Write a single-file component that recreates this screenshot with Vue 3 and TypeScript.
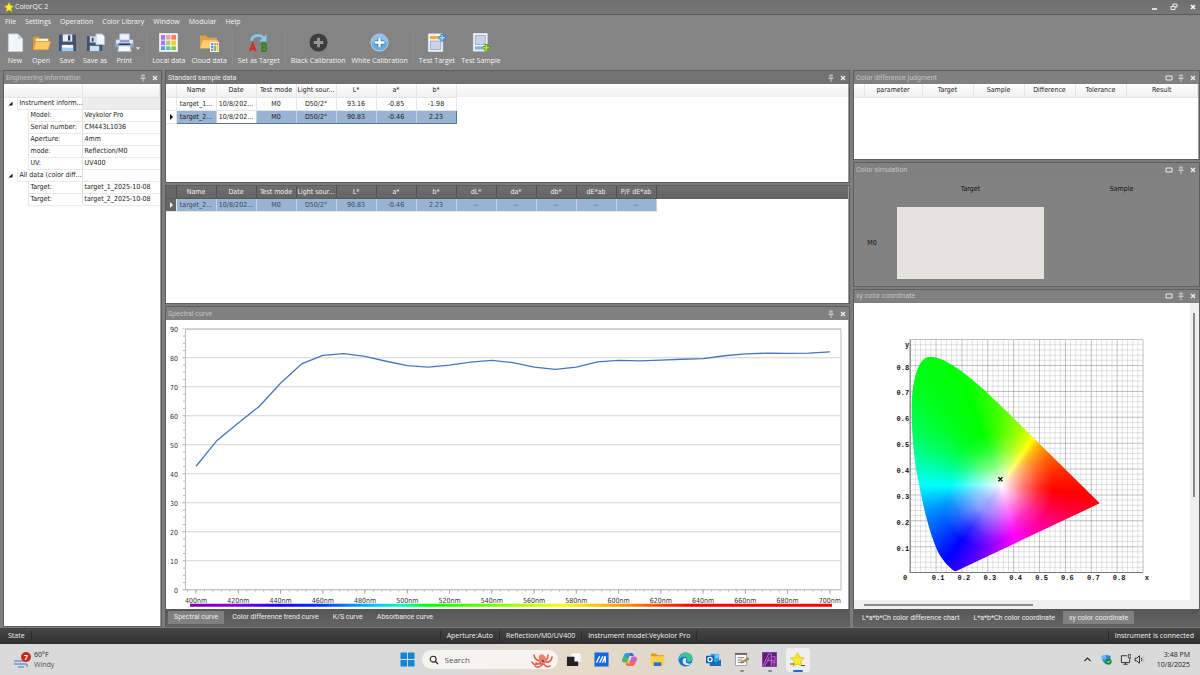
<script setup lang="ts">
import { ref } from 'vue'

interface InfoRow { label: string; value: string; group?: boolean }

const menus = ['File', 'Settings', 'Operation', 'Color Library', 'Window', 'Modular', 'Help']

const info: InfoRow[] = [
  { label: 'Instrument inform...', value: '', group: true },
  { label: 'Model:', value: 'Veykolor Pro' },
  { label: 'Serial number:', value: 'CM443L1036' },
  { label: 'Aperture:', value: '4mm' },
  { label: 'mode:', value: 'Reflection/M0' },
  { label: 'UV:', value: 'UV400' },
  { label: 'All data (color diff...', value: '', group: true },
  { label: 'Target:', value: 'target_1_2025-10-08' },
  { label: 'Target:', value: 'target_2_2025-10-08' },
]

const standardCols = ['Name', 'Date', 'Test mode', 'Light sour...', 'L*', 'a*', 'b*']
const standardRows = [
  ['target_1...', '10/8/202...', 'M0', 'D50/2°', '93.16', '-0.85', '-1.98'],
  ['target_2...', '10/8/202...', 'M0', 'D50/2°', '90.83', '-0.46', '2.23'],
]
const sampleCols = [...standardCols, 'dL*', 'da*', 'db*', 'dE*ab', 'P/F dE*ab']
const sampleRow = [...standardRows[1], '--', '--', '--', '--', '--']
const judgeCols = ['parameter', 'Target', 'Sample', 'Difference', 'Tolerance', 'Result']

const reflectance = [
  42.6, 51.5, 57.5, 63.3, 71.2, 77.9, 80.8, 81.4, 80.5, 78.8, 77.3, 76.8, 77.5, 78.5, 79.1, 78.3,
  76.8, 76, 76.8, 78.6, 79.1, 78.9, 79.2, 79.5, 79.7, 80.7, 81.3, 81.6, 81.5, 81.6, 82,
]
const yOf = (v: number) => Math.round((269 - v * 2.9) * 10) / 10
const xOf = (nm: number) => Math.round((30 + (nm - 400) * 2.113) * 10) / 10
const curve = reflectance.map((v, i) => `${xOf(400 + i * 10)},${yOf(v)}`).join(' ')
const levels = Array.from({ length: 10 }, (_, i) => i * 10)
const waves = Array.from({ length: 16 }, (_, i) => 400 + i * 20)
const minorX = Array.from({ length: 79 }, (_, i) => 396 + i * 4).filter((n) => n <= 702)
const minorY = Array.from({ length: 36 }, (_, i) => i * 2.5)

const step = 25.8
const fine = Array.from({ length: 46 }, (_, i) => i)
const tenths = [1, 2, 3, 4, 5, 6, 7, 8]

const curveTabs = ['Spectral curve', 'Color difference trend curve', 'K/S curve', 'Absorbance curve']
const activeCurve = ref(0)
const coordTabs = ['L*a*b*Ch color difference chart', 'L*a*b*Ch color coordinate', 'xy color coordinate']
const activeCoord = ref(2)
const query = ref('')
</script>

<template>
  <div class="screen">
    <header class="titlebar">
      <svg class="star" viewBox="0 0 20 20"><path d="M10 1l3 6 6 1-4.500 4.500L16 19l-6-3-6 3 1.500-6.500L1 8l6-1z" fill="#f6ee2c" stroke="#d8b810" /></svg>
      <span>ColorQC 2</span>
      <div class="winctl">
        <button aria-label="Minimize"><svg viewBox="0 0 8 8"><path d="M1 6h5" stroke="#fff" stroke-width="1.500" /></svg></button>
        <button aria-label="Restore"><svg viewBox="0 0 8 8"><path d="M3 3V1h4v3H5M1 3.500h4v3H1z" fill="none" stroke="#eee" /></svg></button>
        <button aria-label="Close"><svg viewBox="0 0 8 8"><path d="M2 2l4 4M6 2L2 6" stroke="#fff" stroke-width="1.500" /></svg></button>
      </div>
    </header>

    <nav class="menubar">
      <button v-for="m in menus" :key="m">{{ m }}</button>
    </nav>

    <div class="toolbar">
      <button class="tool">
        <svg viewBox="0 0 20 20"><path d="M2.500 1h10l5 5v13.500h-15z" fill="#f3f6fb" stroke="#c3cedd" /><path d="M12.500 1v5h5z" fill="#c8d4e4" /></svg>New
      </button>
      <button class="tool">
        <svg viewBox="0 0 20 20"><path d="M1 4h6l1.500 2H18v11H1z" fill="#d99a36" /><path d="M4 6h13v5H4z" fill="#fff4d0" /><path d="M1.500 17.500L4 9h15.500L17 17.500z" fill="#ffc766" stroke="#e6a03a" /></svg>Open
      </button>
      <button class="tool">
        <svg viewBox="0 0 20 20"><path d="M1 1.500h16.500L19 3v16H1z" fill="#40526e" /><path d="M5 1.500h10V9H5z" fill="#e6edf6" /><path d="M10.500 2.500h2.500V8h-2.500z" fill="#33445f" /><path d="M4 12.500h12V19H4z" fill="#f5f8fc" /><path d="M4 15.500h12V19H4z" fill="#9fcaf0" /></svg>Save
      </button>
      <button class="tool">
        <svg viewBox="0 0 20 20"><path d="M1 3.500h16V19H1z" fill="#40526e" /><path d="M4 3.500h7V10H4z" fill="#dbe5f0" /><path d="M6 5h2v4H6z" fill="#33445f" /><path d="M4 13.500h10V19H4z" fill="#c9e1f6" /><path d="M10.500 1H17l2.500 2.500V12h-9z" fill="#f3f6fb" stroke="#b3c2d6" /></svg>Save as
      </button>
      <button class="tool print">
        <svg viewBox="0 0 20 20"><path d="M5 1h10v7H5z" fill="#eef3fa" stroke="#b7c6da" /><path d="M1 7h18l1 8H0z" fill="#8fa7cc" /><path d="M1 7h4v3h10V7h4v4H1z" fill="#dae5f3" /><path d="M4 11h12v2H4z" fill="#33425c" /><path d="M4 13.500h12l1 6H3z" fill="#f5f8fd" stroke="#a9bdd8" /></svg>Print
        <svg class="caret" viewBox="0 0 6 4"><path d="M0 0h6L3 4z" fill="#eee" /></svg>
      </button>
      <span class="sep"></span>
      <button class="tool">
        <svg viewBox="0 0 20 20"><path d="M.5.5h19v19H.5z" fill="#fafafa" stroke="#e2e6ef" /><path d="M2 2h4.500v5H2zM2 8h4.500v5H2z" fill="#a77be0" /><path d="M7.500 2H12v5H7.500z" fill="#f29bb2" /><path d="M13 2h5v5h-5z" fill="#ff8048" /><path d="M7.500 8H12v5H7.500z" fill="#a4d75d" /><path d="M13 8h5v5h-5z" fill="#f4ca39" /><path d="M2 14h4.500v4H2z" fill="#559de5" /><path d="M7.500 14H12v4H7.500z" fill="#54c7b3" /><path d="M13 14h5v4h-5z" fill="#80c849" /></svg>Local data
      </button>
      <button class="tool">
        <svg viewBox="0 0 20 20"><path d="M0 2.500h6L8 5h10v11H0z" fill="#dda344" /><path d="M0 16L3 7.500h16L16 16z" fill="#ffcd72" /><path d="M10.500 9.500h9.500V20h-9.500z" fill="#fff" /><path d="M11.500 10.500H14V13h-2.500zM11.500 16.500H14V19h-2.500z" fill="#a77be0" /><path d="M14.500 10.500H17V13h-2.500z" fill="#f28ba8" /><path d="M17.500 10.500h2V13h-2z" fill="#ff8048" /><path d="M11.500 13.500H14V16h-2.500z" fill="#559de5" /><path d="M14.500 13.500H17V19h-2.500z" fill="#6ac973" /><path d="M17.500 13.500h2V19h-2z" fill="#f4ca39" /></svg>Cloud data
      </button>
      <span class="sep"></span>
      <button class="tool">
        <svg viewBox="0 0 20 20"><path d="M2.500 8C4 2 12 1 15 5" fill="none" stroke="#89c4ec" stroke-width="3" /><path d="M18.500 1v8h-8z" fill="#89c4ec" /><path d="M1 19L4 11l3 8M2 16.500h4" fill="none" stroke="#d22e20" stroke-width="2" /><path d="M14 11v8h3q2.500-2 0-4 2-2 0-4zM14 15h3" fill="none" stroke="#39831d" stroke-width="2" /></svg>Set as Target
      </button>
      <span class="sep"></span>
      <button class="tool">
        <svg viewBox="0 0 20 20"><circle cx="10" cy="10" r="9.500" fill="#3d3d3d" /><path d="M10 5v10M5 10h10" stroke="#969696" stroke-width="3" /></svg>Black Calibration
      </button>
      <button class="tool">
        <svg viewBox="0 0 20 20"><circle cx="10" cy="10" r="9" fill="#69a9dd" stroke="#b9daf2" /><path d="M2 9a8 8 0 0 1 16 0q-8 4-16 0" fill="#91c2ea" /><path d="M10 5v10M5 10h10" stroke="#356ba3" stroke-width="4" /><path d="M10 5v10M5 10h10" stroke="#fff" stroke-width="2.500" /></svg>White Calibration
      </button>
      <span class="sep"></span>
      <button class="tool">
        <svg viewBox="0 0 20 20"><path d="M1.500 1h15v18.500h-15z" fill="#fafbfe" stroke="#dbe2ef" /><path d="M3 3h9v3.500H3z" fill="#f3ad45" /><path d="M3.500 8.500h11v9h-11z" fill="#c9d4e7" stroke="#93a8cc" /><path d="M16 1v8M12 5h8" stroke="#3f83c6" stroke-width="3.500" /><path d="M16 2v6M13 5h6" stroke="#9fd0f5" stroke-width="1.500" /></svg>Test Target
      </button>
      <button class="tool">
        <svg viewBox="0 0 20 20"><path d="M2.500.5H17v18.500H2.500z" fill="#fafbfe" stroke="#dbe2ef" /><path d="M4.500 2.500H15v9.500H4.500z" fill="#c9d4e7" stroke="#93a8cc" /><path d="M4 14h8v3.500H4z" fill="#7db8ea" /><path d="M16 11.500v8M12 15.500h8" stroke="#5e9a1e" stroke-width="3.500" /><path d="M16 12.500v6M13 15.500h6" stroke="#b4e352" stroke-width="1.500" /></svg>Test Sample
      </button>
    </div>

    <main class="work">
      <div class="column">
        <section class="panel grow">
          <div class="head">
            <h2>Engineering Information</h2>
            <button aria-label="Pin"><svg viewBox="0 0 8 8"><path d="M2.500 1h3M3 1v3M5 1v3M1.500 4.500h5M4 5v3" fill="none" stroke="#ddd" stroke-width=".8" /></svg></button>
            <button aria-label="Close"><svg viewBox="0 0 8 8"><path d="M2 2l4 4M6 2L2 6" stroke="#eee" stroke-width="1.300" /></svg></button>
          </div>
          <div class="body">
            <table class="tree">
              <colgroup><col class="c-mark" /><col class="c-in" /><col class="c-label" /><col /></colgroup>
              <thead><tr><th colspan="3"></th><th></th></tr></thead>
              <tbody>
                <tr v-for="(r, i) in info" :key="i" :class="{ first: i === 0 }">
                  <td class="mark"><svg v-if="r.group" viewBox="0 0 6 6"><path d="M5.500.5v5h-5z" fill="#222" /></svg></td>
                  <td v-if="r.group" class="name" colspan="2">{{ r.label }}</td>
                  <template v-else><td></td><td class="name">{{ r.label }}</td></template>
                  <td class="val">{{ r.value }}</td>
                </tr>
              </tbody>
            </table>
          </div>
        </section>
      </div>

      <div class="column">
        <section class="panel p-standard">
          <div class="head active">
            <h2>Standard sample data</h2>
            <button aria-label="Pin"><svg viewBox="0 0 8 8"><path d="M2.500 1h3M3 1v3M5 1v3M1.500 4.500h5M4 5v3" fill="none" stroke="#ddd" stroke-width=".8" /></svg></button>
            <button aria-label="Close"><svg viewBox="0 0 8 8"><path d="M2 2l4 4M6 2L2 6" stroke="#eee" stroke-width="1.300" /></svg></button>
          </div>
          <div class="body">
            <div class="headstrip light">
              <table class="grid">
                <thead><tr><th class="ind"></th><th v-for="c in standardCols" :key="c">{{ c }}</th></tr></thead>
                <tbody>
                  <tr v-for="(r, i) in standardRows" :key="i" :class="{ sel: i === 1 }">
                    <td class="ind"><svg v-if="i === 1" viewBox="0 0 6 6"><path d="M2 0l3 3-3 3z" fill="#111" /></svg></td>
                    <td v-for="(c, j) in r" :key="j" :class="{ focus: i === 1 && j === 1 }">{{ c }}</td>
                  </tr>
                </tbody>
              </table>
            </div>
          </div>
        </section>

        <section class="panel p-sample">
          <div class="body">
            <div class="headstrip dark">
              <table class="grid">
                <thead><tr><th class="ind"></th><th v-for="c in sampleCols" :key="c">{{ c }}</th></tr></thead>
                <tbody>
                  <tr class="sel">
                    <td class="ind"><svg viewBox="0 0 6 6"><path d="M2 0l3 3-3 3z" fill="#eee" /></svg></td>
                    <td v-for="(c, j) in sampleRow" :key="j">{{ c }}</td>
                  </tr>
                </tbody>
              </table>
            </div>
          </div>
        </section>

        <section class="panel p-curve">
          <div class="head">
            <h2>Spectral curve</h2>
            <button aria-label="Pin"><svg viewBox="0 0 8 8"><path d="M2.500 1h3M3 1v3M5 1v3M1.500 4.500h5M4 5v3" fill="none" stroke="#ddd" stroke-width=".8" /></svg></button>
            <button aria-label="Close"><svg viewBox="0 0 8 8"><path d="M2 2l4 4M6 2L2 6" stroke="#eee" stroke-width="1.300" /></svg></button>
          </div>
          <div class="body">
            <svg class="chart" viewBox="0 0 682 287">
              <defs>
                <linearGradient id="spectrum">
                  <stop offset="0" stop-color="#7a00a8" /><stop offset=".07" stop-color="#8000e0" />
                  <stop offset=".14" stop-color="#1a00ff" /><stop offset=".2" stop-color="#0030ff" />
                  <stop offset=".29" stop-color="#00c8ff" /><stop offset=".33" stop-color="#00ffc0" />
                  <stop offset=".37" stop-color="#00ff00" /><stop offset=".48" stop-color="#80ff00" />
                  <stop offset=".58" stop-color="#ffff00" /><stop offset=".68" stop-color="#ff9000" />
                  <stop offset=".78" stop-color="#ff0000" /><stop offset="1" stop-color="#ff0000" />
                </linearGradient>
              </defs>
              <g v-for="v in levels" :key="v">
                <line x1="16" x2="675" :y1="yOf(v)" :y2="yOf(v)" stroke="#d4d4d4" />
                <text class="tick" x="12" :y="yOf(v) + 3" text-anchor="end">{{ v }}</text>
              </g>
              <line v-for="v in minorY" :key="v" x1="17" x2="19" :y1="yOf(v)" :y2="yOf(v)" stroke="#bbb" />
              <path d="M19.500 8.500H675V269H19.500z" fill="none" stroke="#bdbdbd" />
              <line v-for="n in minorX" :key="n" :x1="xOf(n)" :x2="xOf(n)" y1="269" y2="271" stroke="#bbb" />
              <g v-for="w in waves" :key="w">
                <line :x1="xOf(w)" :x2="xOf(w)" y1="269" y2="273" stroke="#aaa" />
                <text class="tick" :x="xOf(w)" y="282" text-anchor="middle">{{ w }}nm</text>
              </g>
              <rect x="24" y="283" width="642" height="3" fill="url(#spectrum)" />
              <polyline :points="curve" fill="none" stroke="#4577bd" stroke-width="1.300" />
            </svg>
          </div>
          <div class="tabs">
            <button v-for="(t, i) in curveTabs" :key="t" :class="{ on: activeCurve === i }" @click="activeCurve = i">{{ t }}</button>
          </div>
        </section>
      </div>

      <div class="column">
        <section class="panel p-judge">
          <div class="head">
            <h2>Color difference judgment</h2>
            <button aria-label="Maximize"><svg viewBox="0 0 8 8"><path d="M1 2h6v4H1z" fill="none" stroke="#eee" /></svg></button>
            <button aria-label="Pin"><svg viewBox="0 0 8 8"><path d="M2.500 1h3M3 1v3M5 1v3M1.500 4.500h5M4 5v3" fill="none" stroke="#ddd" stroke-width=".8" /></svg></button>
            <button aria-label="Close"><svg viewBox="0 0 8 8"><path d="M2 2l4 4M6 2L2 6" stroke="#eee" stroke-width="1.300" /></svg></button>
          </div>
          <div class="body">
            <table class="judge">
              <colgroup><col class="j-ind" /><col class="j-par" /><col class="j-col" /><col class="j-col" /><col class="j-col" /><col class="j-col" /><col /></colgroup>
              <thead><tr><th></th><th v-for="c in judgeCols" :key="c">{{ c }}</th></tr></thead>
            </table>
          </div>
        </section>

        <section class="panel p-sim">
          <div class="head">
            <h2>Color simulation</h2>
            <button aria-label="Maximize"><svg viewBox="0 0 8 8"><path d="M1 2h6v4H1z" fill="none" stroke="#eee" /></svg></button>
            <button aria-label="Pin"><svg viewBox="0 0 8 8"><path d="M2.500 1h3M3 1v3M5 1v3M1.500 4.500h5M4 5v3" fill="none" stroke="#ddd" stroke-width=".8" /></svg></button>
            <button aria-label="Close"><svg viewBox="0 0 8 8"><path d="M2 2l4 4M6 2L2 6" stroke="#eee" stroke-width="1.300" /></svg></button>
          </div>
          <div class="sim">
            <span></span><span>Target</span><span>Sample</span>
            <span class="mode">M0</span><div class="swatch"></div><div></div>
          </div>
        </section>

        <section class="panel p-xy">
          <div class="head">
            <h2>xy color coordinate</h2>
            <button aria-label="Maximize"><svg viewBox="0 0 8 8"><path d="M1 2h6v4H1z" fill="none" stroke="#eee" /></svg></button>
            <button aria-label="Pin"><svg viewBox="0 0 8 8"><path d="M2.500 1h3M3 1v3M5 1v3M1.500 4.500h5M4 5v3" fill="none" stroke="#ddd" stroke-width=".8" /></svg></button>
            <button aria-label="Close"><svg viewBox="0 0 8 8"><path d="M2 2l4 4M6 2L2 6" stroke="#eee" stroke-width="1.300" /></svg></button>
          </div>
          <div class="body xybody">
            <svg class="chart" viewBox="0 0 335 295">
              <g transform="translate(56 36)">
                <g v-for="i in fine" :key="i">
                  <path :d="`M${i * 5.16} 0V232M0 ${232 - i * 5.16}H232`" stroke="#000" :stroke-opacity="i % 5 === 0 ? 0.24 : 0.11" />
                </g>
                <foreignObject x="0" y="0" width="232" height="232"><div class="gamut"></div></foreignObject>
                <path d="M0 0V232H232" fill="none" stroke="#777" />
                <path d="M88 137l4 4M92 137l-4 4" stroke="#111" stroke-width="1.300" />
                <text class="axis" x="-1" y="7" text-anchor="end">y</text>
                <text class="axis" x="-3" y="239" text-anchor="end">0</text>
                <text class="axis" x="234" y="239">x</text>
                <g v-for="t in tenths" :key="t">
                  <text class="axis" x="-1" :y="236 - t * step" text-anchor="end">0.{{ t }}</text>
                  <text class="axis" :x="t * step + 2" y="239" text-anchor="middle">0.{{ t }}</text>
                </g>
              </g>
            </svg>
            <div class="vbar"><span></span></div>
            <div class="hbar"><span></span></div>
          </div>
          <div class="tabs">
            <button v-for="(t, i) in coordTabs" :key="t" :class="{ on: activeCoord === i }" @click="activeCoord = i">{{ t }}</button>
          </div>
        </section>
      </div>
    </main>

    <footer class="status">
      <span class="state">State</span>
      <span class="seg push">Aperture:Auto</span>
      <span class="seg">Reflection/M0/UV400</span>
      <span class="seg">Instrument model:Veykolor Pro</span>
      <span class="seg last">Instrument is connected</span>
    </footer>

    <div class="taskbar">
      <button class="weather">
        <svg viewBox="0 0 20 18"><path d="M2 10h13M2 13h11q3 0 2 3M6 16h6" fill="none" stroke="#6c9bd2" stroke-width="1.500" /><circle cx="14" cy="6" r="5" fill="#c42b1c" /><text x="14" y="9" text-anchor="middle" font-size="7" font-weight="700" fill="#fff">7</text></svg>
        <span class="wtext"><span>60°F</span><span class="dim">Windy</span></span>
      </button>
      <div class="apps">
        <button aria-label="Start"><svg viewBox="0 0 16 16"><path d="M.5.5h7v7h-7zM8.500.5h7v7h-7zM.5 8.500h7v7h-7zM8.500 8.500h7v7h-7z" fill="#1285d4" /></svg></button>
        <label class="search">
          <svg viewBox="0 0 12 12"><circle cx="5" cy="5" r="3.500" fill="none" stroke="#222" stroke-width="1.300" /><path d="M7.500 7.500L11 11" stroke="#222" stroke-width="1.500" /></svg>
          <input v-model="query" type="text" placeholder="Search" aria-label="Search" />
          <svg class="octo" viewBox="0 0 24 16"><path d="M12 10Q4 15 2 10M11 9Q5 9 4 3M13 12Q8 17 5 14M14 12q2 4 6 2M15 10q6 1 7-5M14 9q4-1 4-6M12 11q-3 2-6 0" fill="none" stroke="#e0604c" stroke-width="1.600" stroke-linecap="round" /><ellipse cx="12.500" cy="7" rx="3.500" ry="5" fill="#ee8068" transform="rotate(-25 12.500 7)" /><circle cx="13" cy="9" r="1" fill="#5c3050" /></svg>
        </label>
        <button aria-label="Task view"><svg viewBox="0 0 16 16"><path d="M5 1h11v10H5z" fill="#f7f7f7" stroke="#ccc" stroke-width=".5" /><path d="M1 5h8v5h4v5H1z" fill="#222" /></svg></button>
        <button aria-label="Store app"><svg viewBox="0 0 16 16"><path d="M.5.5h15v15H.5z" fill="#1268e0" /><path d="M2.500 11.500l3.500-7M6 11.500l3.500-7M9 11.500l3-7v7" fill="none" stroke="#fff" stroke-width="1.500" /></svg></button>
        <button aria-label="Copilot"><svg viewBox="0 0 16 16"><path d="M5 1h5q2 0 2.500 3H8L5.500 11H2Q-.5 10.500.5 7.500L2 3.500Q3 1 5 1z" fill="#2a9be0" /><path d="M2 4l-1.500 4Q0 11 2 11h3.500L7 7z" fill="#46b964" /><path d="M11 15H6q-2 0-2.500-3H8l2.500-7H14q2.500.5 1.500 3.500L14 12.500Q13 15 11 15z" fill="#f26a5a" /><path d="M10.500 5H14q2.500.5 1.500 3.500L14.500 11H8.500z" fill="#c75fd6" /><path d="M3.500 12H8l1-3H6z" fill="#f5b53a" /><path d="M9 1h1q2 0 2.500 3H8z" fill="#3560d8" /></svg></button>
        <button aria-label="File Explorer"><svg viewBox="0 0 16 16"><path d="M1 1.500h5.500L8 3.500h7V12H1z" fill="#dd9a16" /><path d="M1 4.500h14V14H1z" fill="#ffcf48" /><path d="M4 11h8v4H4z" fill="#2574cc" /></svg></button>
        <button aria-label="Edge"><svg viewBox="0 0 16 16"><circle cx="8" cy="8" r="7.500" fill="#1576c8" /><path d="M.8 6.500Q3 .5 8.500.5q7 .5 7 6.500-.5 4-5 3.500-1.500-.5-.5-2Q10 5 6.500 5 2 5 .8 9z" fill="#3ec494" /><path d="M8 6.500q-3 0-3 3 0 4 4.500 4.500 3 0 5-2-3 1-5.500-.5-1.500-1.500 0-3.500Q9 7 8 6.500z" fill="#dceefa" /></svg></button>
        <button aria-label="Outlook"><svg viewBox="0 0 16 16"><path d="M5 2h9v9H5z" fill="#2d9fe8" /><path d="M9.500 2H14v4.500H9.500z" fill="#63c6f7" /><path d="M4 8l6 3 6-3v7H4z" fill="#1b70bd" /><path d="M0 4h8.500v8H0z" fill="#0b60b0" /><circle cx="4.300" cy="8" r="2.200" fill="none" stroke="#fff" stroke-width="1.300" /></svg></button>
        <button class="running" aria-label="Notes"><svg viewBox="0 0 16 16"><path d="M1.500 2.500h12v12h-12z" fill="#fafafa" stroke="#999" /><path d="M1 1h13v2H1z" fill="#666" /><path d="M4 6h7M4 8.500h5M4 11h6" stroke="#777" /><path d="M7 11l8-5 1 1.500-7.500 4.500z" fill="#c79435" stroke="#68491c" stroke-width=".5" /></svg></button>
        <button class="running" aria-label="Affinity Photo"><svg viewBox="0 0 16 16"><path d="M.5.5h15v15H.5z" fill="#5a2270" stroke="#8a35a8" /><path d="M1 15L7 2h3v13M5 9h5M10 5h4v4h-4M3 15l5-10M10 11h5M13 9v6" fill="none" stroke="#c465e4" /></svg></button>
        <button class="current" aria-label="ColorQC"><svg viewBox="0 0 20 20"><path d="M10 1l3 6 6 1-4.500 4.500L16 19l-6-3-6 3 1.500-6.500L1 8l6-1z" fill="#f8e92b" stroke="#d0c020" /><path d="M0 16h6M15 18h5" stroke="#555" stroke-width="1.500" /></svg></button>
      </div>
      <div class="tray">
        <svg viewBox="0 0 16 16"><path d="M3.500 10.500L8 6l4.500 4.500" fill="none" stroke="#222" stroke-width="1.600" /></svg>
        <svg class="shield" viewBox="0 0 16 16"><path d="M7.500 1L14 3q0 9-6.500 12Q1 12 1 3z" fill="#2b88d8" /><path d="M7.500 1v7H1.200L1 3z" fill="#62b8f2" /><circle cx="11" cy="11" r="4.500" fill="#168a32" /><path d="M9 11l1.500 1.500L13 9.500" fill="none" stroke="#fff" stroke-width="1.300" /></svg>
        <svg viewBox="0 0 16 16"><path d="M10 2.500H2v10h12V9M5 15h6M8 12.500V15" fill="none" stroke="#222" stroke-width="1.300" /><path d="M12 1h4v4h-1l-1 3-1-3h-1z" fill="none" stroke="#222" stroke-width="1.200" /></svg>
        <svg class="vol" viewBox="0 0 16 16"><path d="M1.500 6H4l4-3.500v11L4 10H1.500z" fill="none" stroke="#222" stroke-width="1.300" /><path d="M10.500 5.500q2 2.500 0 5" fill="none" stroke="#222" stroke-width="1.300" /><path d="M13 3.500q3 4.500 0 9" fill="none" stroke="#aaa" /></svg>
        <div class="clock"><span>3:48 PM</span><span>10/8/2025</span></div>
      </div>
    </div>
  </div>
</template>

<style>
body { margin: 0; background: #7b7b7b; }
</style>

<style scoped>
.screen {
  display: flex;
  flex-direction: column;
  height: 100vh;
  font-family: "DejaVu Sans Condensed", "DejaVu Sans", sans-serif;
  font-size: 7px;
  line-height: 10px;
  color: #1c1c1c;
  background: #848484;
  overflow: hidden;
}
.screen *, .screen *::before { box-sizing: border-box; }
button { border: 0; padding: 0; margin: 0; background: none; font: inherit; color: inherit; white-space: nowrap; }
svg { display: block; }
table { border-collapse: collapse; border-spacing: 0; table-layout: fixed; }
th, td { padding: 0; font-weight: 400; overflow: hidden; white-space: nowrap; }

.titlebar {
  display: flex;
  align-items: center;
  gap: 1px;
  height: 15px;
  padding: 0 3px 0 4px;
  color: #f2f2f2;
  font-family: "Open Sans", sans-serif;
  background: linear-gradient(#6f6f6f, #787878);
  border-bottom: 1px solid #5a5a5a;
}
.star { width: 10px; height: 10px; }
.winctl { display: flex; gap: 11px; margin-left: auto; }
.winctl svg { width: 8px; height: 8px; }
.menubar {
  display: flex;
  gap: 9px;
  padding: 2px 5px 0;
  color: #f4f4f4;
  font-family: "Open Sans", sans-serif;
}
.toolbar {
  display: flex;
  height: 43px;
  padding: 6px 2px 0;
  color: #f4f4f4;
  font-family: "Open Sans", sans-serif;
}
.tool {
  position: relative;
  display: flex;
  flex-direction: column;
  align-items: center;
  gap: 4px;
  min-width: 26px;
  padding: 0 3px;
}
.tool svg { width: 19px; height: 19px; }
.print { min-width: 28px; margin-right: 6px; }
.tool .caret { position: absolute; right: -2px; top: 14px; width: 4px; height: 3px; }
.sep { width: 1px; height: 32px; margin: 0 2px; background: #787878; border-right: 1px solid #8c8c8c; }

.work {
  flex: 1;
  min-height: 0;
  display: grid;
  grid-template-columns: 159px 1fr 347px;
  gap: 3px;
  padding: 0 0 1px 3px;
  background: #7d7d7d;
}
.column { display: flex; flex-direction: column; gap: 2px; min-width: 0; min-height: 0; }
.panel {
  display: flex;
  flex-direction: column;
  min-height: 0;
  border: 1px solid #5e5e5e;
  background: #828282;
}
.grow { flex: 1; }
.p-standard { flex: 112 1 0; }
.p-sample { flex: 119 1 0; }
.p-curve { flex: 322 1 0; }
.p-judge { flex: 89 1 0; }
.p-sim { flex: 124 1 0; }
.p-xy { flex: 340 1 0; }
.head {
  display: flex;
  align-items: center;
  gap: 4px;
  height: 13px;
  flex: none;
  padding: 0 2px;
  color: #c4c4c4;
  background: #808080;
}
.head.active { color: #ececec; background: #727272; }
.head h2 { margin: 0 auto 0 0; font: 400 7px/10px Roboto, sans-serif; }
.head svg { width: 8px; height: 8px; }
.body { flex: 1; min-height: 0; background: #fff; border-right: 1px solid #9b9b9b; overflow: hidden; }

.tree { width: 100%; }
.c-mark { width: 13px; }
.c-in { width: 11px; }
.c-label { width: 54px; }
.tree th { height: 13px; background: linear-gradient(#fff, #f0f0f0); border: 1px solid #e6e6e6; border-left: 0; border-top: 0; }
.tree td { height: 12px; border-bottom: 1px solid #e9e9e9; }
.tree .name { padding-left: 2px; border-left: 1px solid #e9e9e9; }
.tree .val { padding-left: 2px; border-left: 1px solid #e0e0e0; }
.tree .mark { border-bottom: 0; }
.tree td:nth-child(2):not(.name) { border-bottom: 0; }
.tree .first .val { background: #ededed; }
.mark svg { width: 5px; height: 5px; margin-left: 4px; }

.headstrip { background-repeat: no-repeat; background-size: 100% 13px; }
.headstrip.light { background-image: linear-gradient(#fff, #f0f0f2); }
.headstrip.dark { background-image: linear-gradient(#6f6f6f, #646464); }
.grid th, .grid td { width: 40px; height: 13px; text-align: center; border-right: 1px solid #e6e6e6; border-bottom: 1px solid #e6e6e6; }
.grid .ind { width: 10px; }
.grid .ind svg { width: 6px; height: 6px; margin: 0 auto; }
.grid .sel td:not(.ind) { background: #98b3d3; border-right-color: #c3d2e4; }
.light .sel td:not(.ind) { border-top: 1px solid #5d7490; border-bottom: 1px solid #5d7490; }
.light .sel td:last-child { border-right-color: #5d7490; }
.light .sel td.focus { background: #fff; }
.dark th { color: #eee; border-right-color: #505050; border-bottom-color: #5a5a5a; }
.dark .ind { background: #666; }
.dark .sel { color: #40495a; }

.judge { width: 100%; }
.judge th { height: 13px; text-align: center; background: linear-gradient(#fff, #f0f0f2); border-right: 1px solid #e4e4e4; border-bottom: 1px solid #e6e6e6; }
.j-ind { width: 10px; }
.j-par { width: 58px; }
.j-col { width: 51px; }

.sim {
  flex: 1;
  display: grid;
  grid-template-columns: 43px 147px 1fr;
  grid-template-rows: 14px 1fr;
  row-gap: 11px;
  padding: 6px 0 7px;
  align-items: center;
  justify-items: center;
  color: #111;
}
.mode { padding-right: 7px; }
.swatch { width: 100%; height: 100%; background: #e4e3df; }

.chart { width: 100%; height: 100%; min-height: 0; }
.tick { font-size: 7px; fill: #333; }
.axis { font-family: "Liberation Mono", monospace; font-size: 7px; font-weight: 700; fill: #111; }
.xybody { display: grid; grid-template-columns: 1fr 9px; grid-template-rows: minmax(0, 1fr) 9px; border: 0; }
.vbar { background: #f0f0f0; padding: 10px 4px 0 3px; }
.vbar span { display: block; width: 2px; height: 64%; background: #8a8a8a; }
.hbar { grid-column: 1 / 3; background: #f0f0f0; padding: 4px 10px 0; }
.hbar span { display: block; width: 52%; height: 2px; background: #8a8a8a; }
.gamut {
  width: 232px;
  height: 232px;
  clip-path: path("M45 231L189 163L100 75C85 60 73 49 60 38C45 27 32 17 20 17C8 17 1.500 40 1.500 70C1.500 100 5 128 9 145C14 172 21 197 28 212C33 221 40 228 45 231Z");
  background:
    radial-gradient(circle at 91px 145px, #fff 0, rgba(255, 255, 255, 0.8) 8px, rgba(255, 255, 255, 0.45) 22px, rgba(255, 255, 255, 0.15) 38px, rgba(255, 255, 255, 0) 52px),
    radial-gradient(circle at 72px 168px, rgba(255, 255, 255, 0.4) 0, rgba(255, 255, 255, 0.25) 14px, rgba(255, 255, 255, 0) 38px),
    conic-gradient(from 0deg at 91px 145px,
      #50ff00 0deg, #a0ff00 18deg, #ffff00 34deg, #ffb000 43deg, #ff6000 60deg, #ff2800 78deg, #ff0000 96deg,
      #ff0030 108deg, #ff0080 128deg, #ff00c0 150deg, #ff00ff 166deg, #c000ff 180deg, #8000ff 192deg,
      #4000ff 204deg, #0000ff 216deg, #0048ff 232deg, #0098ff 252deg, #00ffff 270deg, #00ffb0 284deg,
      #00ff60 300deg, #00ff20 318deg, #00ff00 340deg, #50ff00 360deg);
}

.tabs {
  display: flex;
  align-items: flex-start;
  gap: 2px;
  flex: none;
  height: 17px;
  padding: 2px 2px 0;
  color: #efefef;
  font-family: Roboto, sans-serif;
  background: linear-gradient(#565656, #646464);
}
.tabs button { height: 13px; padding: 0 6px; }
.tabs .on { background: #808080; }

.status {
  display: flex;
  flex: none;
  align-items: center;
  height: 16px;
  color: #f2f2f2;
  font-family: "Open Sans", sans-serif;
  background: linear-gradient(#464646, #303030);
}
.state { padding: 0 6px 0 8px; border-right: 1px solid #2a2a2a; }
.seg { padding: 0 6px; border-right: 1px solid #2a2a2a; }
.push { margin-left: 34%; border-left: 1px solid #2a2a2a; }
.last { margin-left: auto; border-right: 0; border-left: 1px solid #2a2a2a; }

.taskbar {
  display: grid;
  grid-template-columns: 1fr auto 1fr;
  align-items: center;
  flex: none;
  height: 31px;
  font-family: "Open Sans", sans-serif;
  background: linear-gradient(90deg, #dadada 38%, #e6dac8 48%, #e2d8c9 54%, #dadada 64%);
}
.weather { display: flex; align-items: center; gap: 2px; padding-left: 12px; text-align: left; }
.weather svg { width: 20px; height: 18px; }
.wtext { display: flex; flex-direction: column; }
.dim { color: #555; }
.apps { display: flex; align-items: center; gap: 4px; padding-left: 7px; }
.apps button { position: relative; display: grid; place-items: center; width: 24px; height: 24px; border-radius: 3px; }
.apps button:first-child { width: 20px; }
.apps button svg { width: 15px; height: 15px; }
.apps .current { background: #efefef; }
.running::before, .current::before { content: ""; position: absolute; bottom: 0; width: 4px; height: 2px; border-radius: 1px; background: #888; }
.apps .current::before { width: 10px; background: #1273cf; }
.search { display: flex; align-items: center; gap: 6px; width: 136px; height: 19px; padding: 0 4px 0 7px; border-radius: 10px; background: #f6f4f1; }
.search > svg { width: 10px; height: 10px; flex: none; }
.search .octo { width: 24px; height: 16px; }
.search input { flex: 1; min-width: 0; border: 0; padding: 0; outline: 0; background: none; font: 8px/12px "Open Sans", sans-serif; color: #333; }
.search input::placeholder { color: #555; opacity: 1; }
.tray { display: flex; justify-content: flex-end; align-items: center; gap: 8px; padding-right: 10px; }
.tray svg { width: 11px; height: 11px; }
.tray .vol { margin-left: -5px; }
.clock { display: flex; flex-direction: column; text-align: right; margin-left: 4px; }
</style>
